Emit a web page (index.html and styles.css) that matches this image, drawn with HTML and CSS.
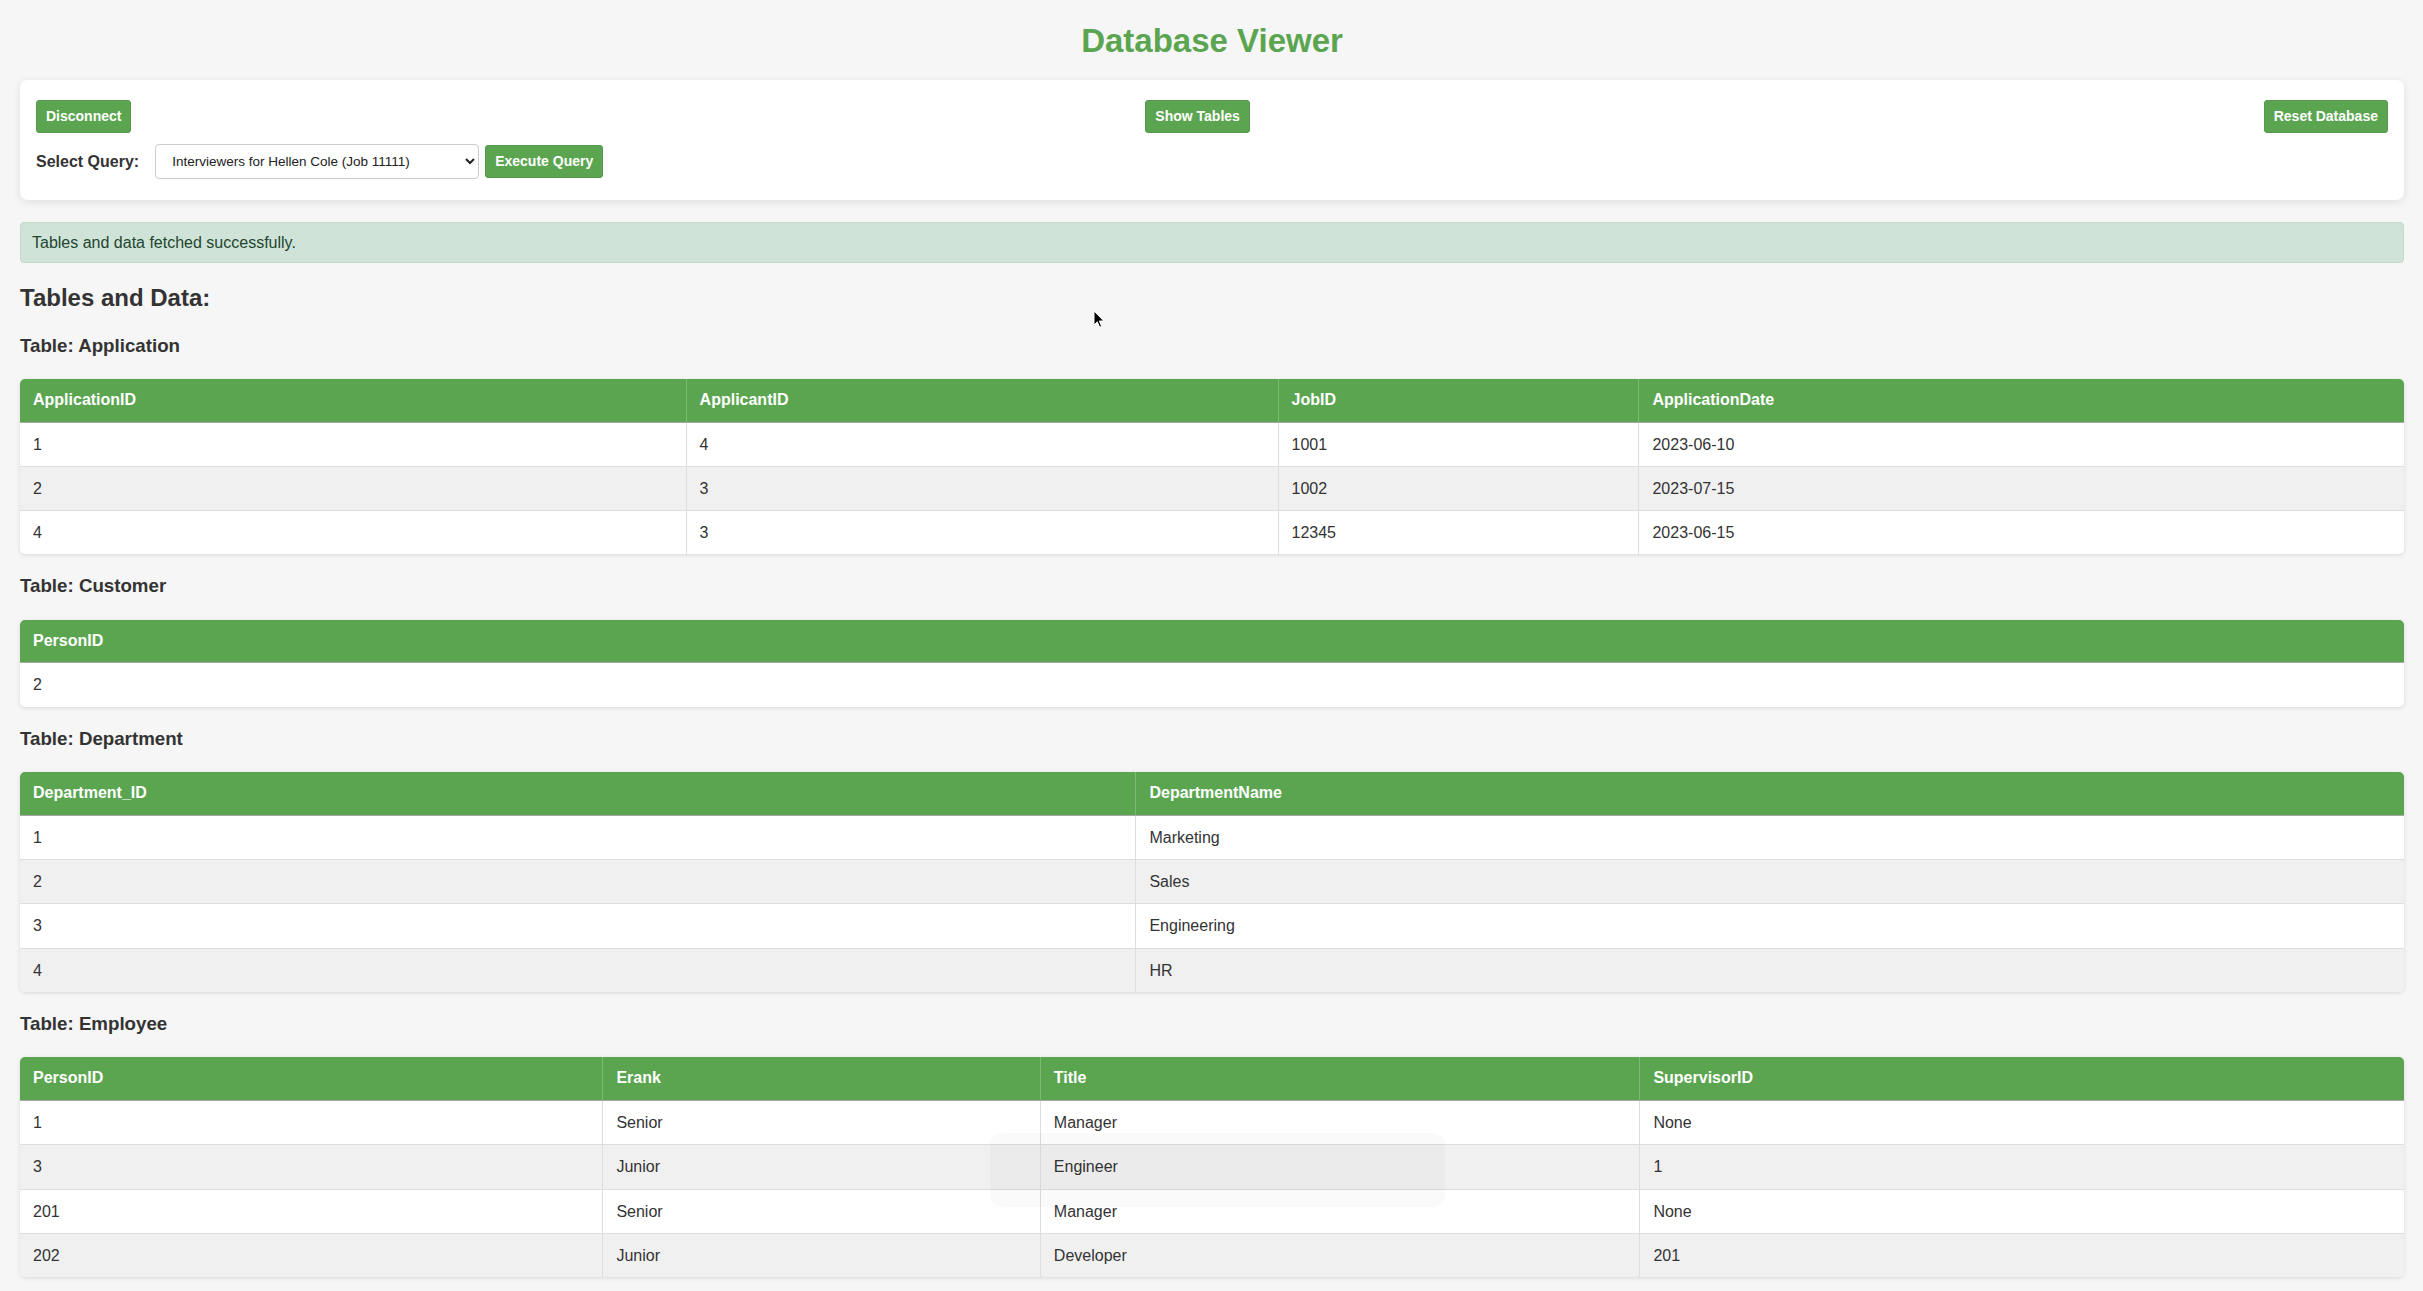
FILE: index.html
```html
<!DOCTYPE html>
<html lang="en">
<head>
<meta charset="utf-8">
<title>Database Viewer</title>
<link rel="stylesheet" href="styles.css">
</head>
<body>
<h1 class="title">Database Viewer</h1>

<div class="card">
  <div class="btn-row">
    <button class="btn">Disconnect</button>
    <button class="btn">Show Tables</button>
    <button class="btn">Reset Database</button>
  </div>
  <div class="query-row">
    <label class="query-label" for="q">Select Query:</label>
    <select id="q" class="query-select">
      <option>Interviewers for Hellen Cole (Job 11111)</option>
    </select>
    <button class="btn btn-exec">Execute Query</button>
  </div>
</div>

<div class="message">Tables and data fetched successfully.</div>

<h2 class="section-title">Tables and Data:</h2>

<h3 class="table-title">Table: Application</h3>
<div class="table-wrap">
  <table class="data">
    <colgroup><col class="app-1"><col class="app-2"><col class="app-3"><col class="app-4"></colgroup>
    <thead><tr><th>ApplicationID</th><th>ApplicantID</th><th>JobID</th><th>ApplicationDate</th></tr></thead>
    <tbody>
      <tr><td>1</td><td>4</td><td>1001</td><td>2023-06-10</td></tr>
      <tr><td>2</td><td>3</td><td>1002</td><td>2023-07-15</td></tr>
      <tr><td>4</td><td>3</td><td>12345</td><td>2023-06-15</td></tr>
    </tbody>
  </table>
</div>

<h3 class="table-title">Table: Customer</h3>
<div class="table-wrap">
  <table class="data">
    <thead><tr><th>PersonID</th></tr></thead>
    <tbody>
      <tr><td>2</td></tr>
    </tbody>
  </table>
</div>

<h3 class="table-title">Table: Department</h3>
<div class="table-wrap">
  <table class="data">
    <colgroup><col class="dep-1"><col class="dep-2"></colgroup>
    <thead><tr><th>Department_ID</th><th>DepartmentName</th></tr></thead>
    <tbody>
      <tr><td>1</td><td>Marketing</td></tr>
      <tr><td>2</td><td>Sales</td></tr>
      <tr><td>3</td><td>Engineering</td></tr>
      <tr><td>4</td><td>HR</td></tr>
    </tbody>
  </table>
</div>

<h3 class="table-title">Table: Employee</h3>
<div class="table-wrap">
  <table class="data">
    <colgroup><col class="emp-1"><col class="emp-2"><col class="emp-3"><col class="emp-4"></colgroup>
    <thead><tr><th>PersonID</th><th>Erank</th><th>Title</th><th>SupervisorID</th></tr></thead>
    <tbody>
      <tr><td>1</td><td>Senior</td><td>Manager</td><td>None</td></tr>
      <tr><td>3</td><td>Junior</td><td>Engineer</td><td>1</td></tr>
      <tr><td>201</td><td>Senior</td><td>Manager</td><td>None</td></tr>
      <tr><td>202</td><td>Junior</td><td>Developer</td><td>201</td></tr>
    </tbody>
  </table>
</div>

<div class="player-overlay"></div>

<svg class="cursor" width="12" height="19" viewBox="0 0 12 19" aria-hidden="true">
  <path d="M1 1 L1 15 L4.3 11.8 L6.6 17.2 L8.6 16.3 L6.4 11 L10.8 11 Z" fill="#000" stroke="#fff" stroke-width="1"/>
</svg>
</body>
</html>
```

FILE: styles.css
```css
html, body {
  margin: 0;
  padding: 0;
}

body {
  background: #f6f6f6;
  color: #333;
  font-family: "Liberation Sans", Arial, sans-serif;
  padding: 22px 19px 20px 20px;
  position: relative;
}

.title {
  margin: 0 0 21px;
  text-align: center;
  color: #5ba551;
  font-size: 33px;
  line-height: 37px;
  font-weight: bold;
}

.card {
  background: #fff;
  border-radius: 8px;
  box-shadow: 0 2px 8px rgba(0, 0, 0, 0.1);
  padding: 20px 16px 21px;
}

.btn-row {
  display: flex;
  justify-content: space-between;
  align-items: center;
}

.btn {
  background: #5ba551;
  color: #fff;
  border: 1px solid #55994c;
  border-radius: 3px;
  font-family: "Liberation Sans", Arial, sans-serif;
  font-size: 14px;
  font-weight: bold;
  line-height: 17px;
  padding: 7px 9px;
  cursor: pointer;
}

.query-row {
  display: flex;
  align-items: center;
  margin-top: 11px;
}

.query-label {
  font-size: 16px;
  font-weight: bold;
  color: #333;
  margin-right: 16px;
}

.query-select {
  width: 324px;
  height: 35px;
  font-family: "Liberation Sans", Arial, sans-serif;
  font-size: 13.5px;
  color: #222;
  background: #fff;
  border: 1px solid #ccc;
  border-radius: 4px;
  padding: 0 8px 0 12px;
  margin-right: 6px;
}

.btn-exec {
  padding: 7px 9px;
}

.message {
  margin-top: 22px;
  background: #cfe3d9;
  border: 1px solid #c3d9cc;
  border-radius: 4px;
  color: #24452f;
  font-size: 16px;
  line-height: 19px;
  padding: 10px 11px;
}

.section-title {
  margin: 21px 0 23px;
  font-size: 24px;
  line-height: 27.6px;
  font-weight: bold;
  color: #333;
}

.table-title {
  margin: 0 0 23px;
  font-size: 18.72px;
  line-height: 21.5px;
  font-weight: bold;
  color: #333;
}

.table-wrap {
  background: #fff;
  border-radius: 5px;
  overflow: hidden;
  box-shadow: 0 1px 4px rgba(0, 0, 0, 0.12);
  margin-bottom: 21px;
}

.data {
  width: 100%;
  border-collapse: collapse;
  table-layout: fixed;
  font-size: 16px;
}

.data th {
  background: #5ba551;
  color: #fff;
  text-align: left;
  font-weight: bold;
  padding: 12px 12px 12px 13px;
  line-height: 18.5px;
  border-right: 1px solid #7dba75;
  border-bottom: 1px solid #a7a7a7;
}

.data td {
  padding: 12px 12px 12px 13px;
  line-height: 19.3px;
  color: #333;
  border-right: 1px solid #dedede;
  border-bottom: 1px solid #dedede;
}

.data th:last-child,
.data td:last-child {
  border-right: none;
}

.data tbody tr:last-child td {
  border-bottom: none;
}

.data tbody tr:nth-child(even) td {
  background: #f0f0f0;
}

.app-1 { width: 27.94%; }
.app-2 { width: 24.83%; }
.app-3 { width: 15.14%; }
.app-4 { width: 32.09%; }

.dep-1 { width: 46.81%; }
.dep-2 { width: 53.19%; }

.emp-1 { width: 24.45%; }
.emp-2 { width: 18.35%; }
.emp-3 { width: 25.15%; }
.emp-4 { width: 32.05%; }

.player-overlay {
  position: absolute;
  left: 990px;
  top: 1133px;
  width: 455px;
  height: 74px;
  border-radius: 12px;
  background: rgba(0, 0, 0, 0.018);
  pointer-events: none;
}

.cursor {
  position: absolute;
  left: 1093px;
  top: 310px;
}
```
